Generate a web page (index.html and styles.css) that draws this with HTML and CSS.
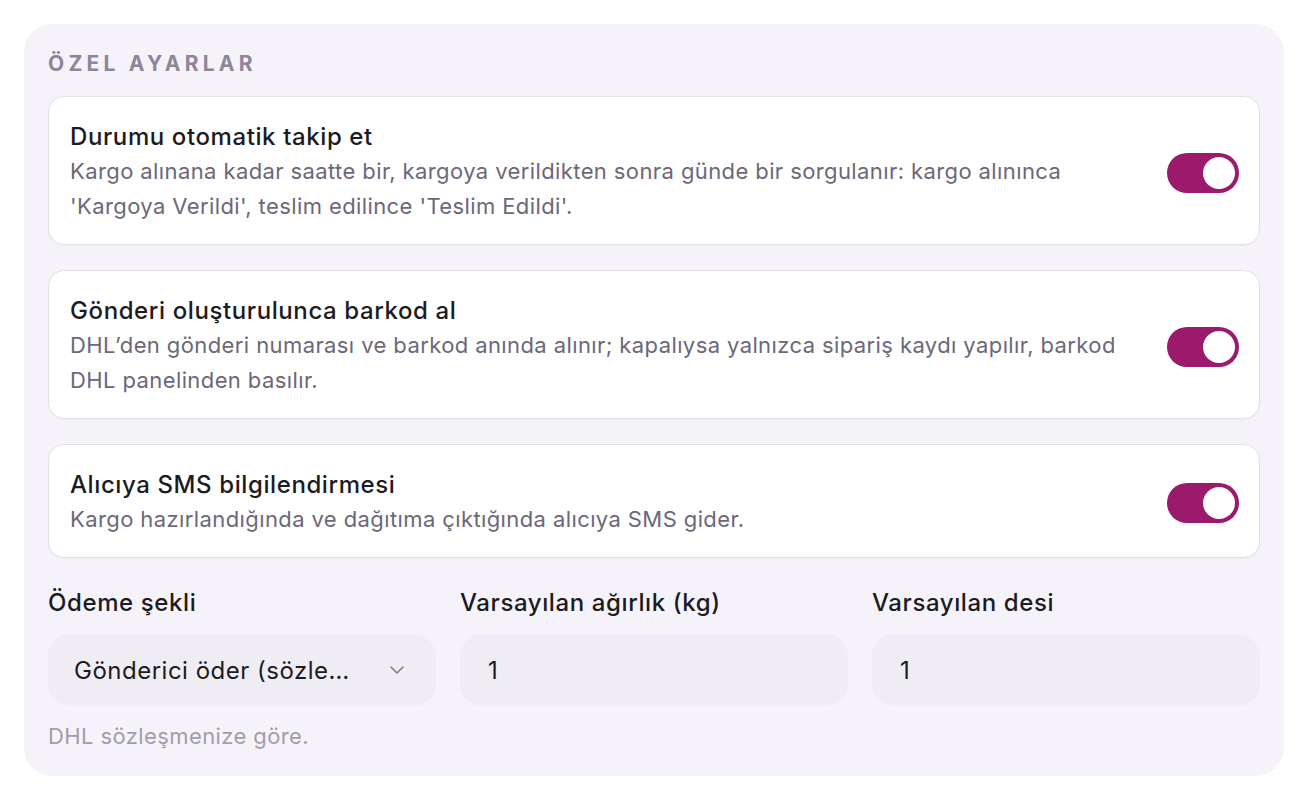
FILE: index.html
```html
<!DOCTYPE html>
<html lang="tr">
<head>
    <meta charset="UTF-8">
    <meta name="viewport" content="width=device-width, initial-scale=1.0">
    <title>Özel Ayarlar</title>
    <link rel="stylesheet" href="styles.css">
</head>
<body>
    <div class="panel">
        <h2 class="panel-title">Özel Ayarlar</h2>

        <div class="option">
            <div class="option-text">
                <div class="option-title">Durumu otomatik takip et</div>
                <div class="option-desc">Kargo alınana kadar saatte bir, kargoya verildikten sonra günde bir sorgulanır: kargo alınınca 'Kargoya Verildi', teslim edilince 'Teslim Edildi'.</div>
            </div>
            <span class="toggle on"><span class="knob"></span></span>
        </div>

        <div class="option">
            <div class="option-text">
                <div class="option-title">Gönderi oluşturulunca barkod al</div>
                <div class="option-desc">DHL’den gönderi numarası ve barkod anında alınır; kapalıysa yalnızca sipariş kaydı yapılır, barkod DHL panelinden basılır.</div>
            </div>
            <span class="toggle on"><span class="knob"></span></span>
        </div>

        <div class="option">
            <div class="option-text">
                <div class="option-title">Alıcıya SMS bilgilendirmesi</div>
                <div class="option-desc">Kargo hazırlandığında ve dağıtıma çıktığında alıcıya SMS gider.</div>
            </div>
            <span class="toggle on"><span class="knob"></span></span>
        </div>

        <div class="fields">
            <div class="field">
                <label class="field-label">Ödeme şekli</label>
                <div class="select">
                    <span class="select-value">Gönderici öder (sözleşmeli)</span>
                    <svg class="chevron" width="20" height="20" viewBox="0 0 20 20" fill="none" stroke="currentColor" stroke-width="1.6" stroke-linecap="round" stroke-linejoin="round"><path d="M4 7l6 6 6-6"/></svg>
                </div>
                <div class="hint">DHL sözleşmenize göre.</div>
            </div>
            <div class="field">
                <label class="field-label">Varsayılan ağırlık (kg)</label>
                <input class="input" type="text" value="1">
            </div>
            <div class="field">
                <label class="field-label">Varsayılan desi</label>
                <input class="input" type="text" value="1">
            </div>
        </div>
    </div>
</body>
</html>
```

FILE: styles.css
```css
* {
    margin: 0;
    padding: 0;
    box-sizing: border-box;
    font-family: 'Inter', 'Noto Sans', sans-serif;
}

body {
    background: #ffffff;
    padding: 24px;
}

.panel {
    width: 1260px;
    height: 752px;
    background: #f5f3f9;
    border-radius: 28px;
    padding: 28px 24px 24px;
}

.panel-title {
    font-size: 21px;
    line-height: 24px;
    font-weight: 700;
    letter-spacing: 4.2px;
    text-transform: uppercase;
    color: #8d859a;
    margin-bottom: 20px;
}

.option {
    display: flex;
    align-items: center;
    gap: 48px;
    background: #ffffff;
    border: 1px solid #e3dfe8;
    border-radius: 16px;
    padding: 24px 20px 20px 21px;
    margin-bottom: 25px;
    box-shadow: 0 1px 2px rgba(40, 30, 60, 0.04);
}

.option-text {
    flex: 1;
}

.option-title {
    font-size: 24px;
    line-height: 32px;
    font-weight: 500;
    letter-spacing: 0.6px;
    color: #1c1b22;
    margin-bottom: 1px;
}

.option-desc {
    font-size: 22px;
    line-height: 35px;
    letter-spacing: 0.4px;
    color: #6c6779;
}

.toggle {
    flex: none;
    width: 72px;
    height: 40px;
    border-radius: 20px;
    background: #d9d4df;
    padding: 4px;
    display: flex;
}

.toggle.on {
    background: #9b1a6c;
    justify-content: flex-end;
}

.knob {
    width: 32px;
    height: 32px;
    border-radius: 50%;
    background: #ffffff;
}

.fields {
    display: grid;
    grid-template-columns: repeat(3, minmax(0, 1fr));
    gap: 24px;
    margin-top: 29px;
}

.field {
    min-width: 0;
}

.field-label {
    display: block;
    font-size: 24px;
    line-height: 32px;
    font-weight: 500;
    letter-spacing: 0.6px;
    color: #1c1b22;
    margin-bottom: 15px;
}

.select,
.input {
    width: 100%;
    height: 72px;
    border: none;
    border-radius: 22px;
    background: #efedf3;
    font-size: 24px;
    letter-spacing: 0.5px;
    color: #1c1b22;
    padding: 0 26px;
    outline: none;
}

.select {
    display: flex;
    align-items: center;
    gap: 28px;
    padding-right: 29px;
}

.select-value {
    flex: 1;
    min-width: 0;
    white-space: nowrap;
    overflow: hidden;
    text-overflow: ellipsis;
}

.input {
    padding-left: 28px;
}

.chevron {
    flex: none;
    color: #827c8d;
}

.hint {
    font-size: 22px;
    line-height: 32px;
    letter-spacing: 0.4px;
    color: #a29cac;
    margin-top: 14px;
}
```
